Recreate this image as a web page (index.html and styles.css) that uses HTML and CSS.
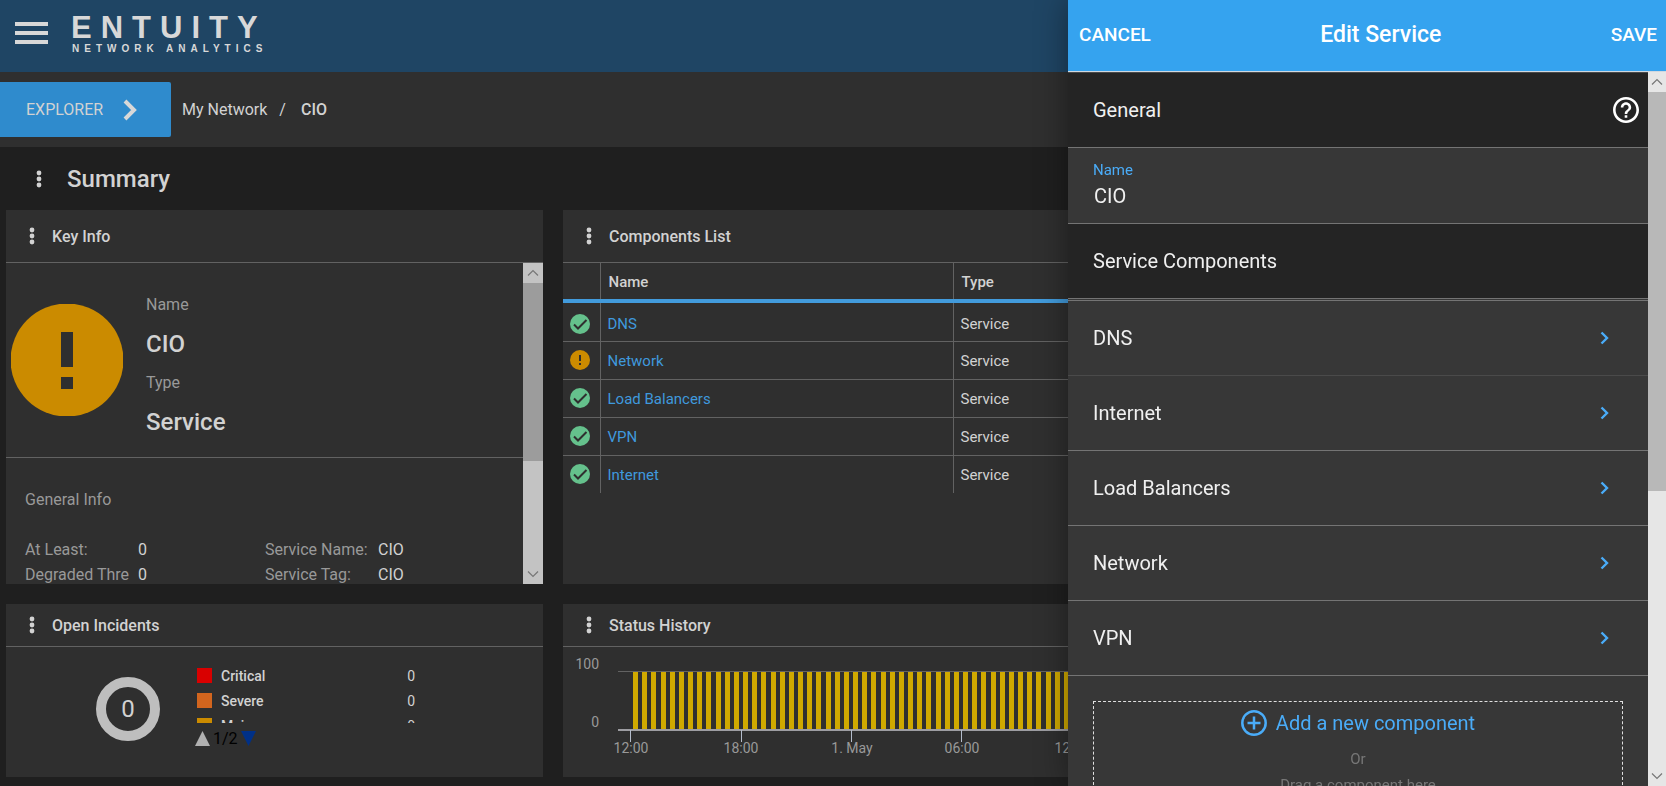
FILE: index.html
```
<!DOCTYPE html>
<html lang="en">

<head>
    <meta charset="UTF-8">
    <meta name="viewport" content="width=device-width, initial-scale=1.0">
    <title>Entuity - Edit Service</title>
    <link rel="stylesheet" href="styles.css">
</head>

<body>

    <!-- shared icons -->
    <svg class="sprite" aria-hidden="true">
        <symbol id="dots" viewBox="0 0 6 18">
            <circle cx="3" cy="3" r="2.4" />
            <circle cx="3" cy="9" r="2.4" />
            <circle cx="3" cy="15" r="2.4" />
        </symbol>
        <symbol id="ok" viewBox="0 0 20 20">
            <circle cx="10" cy="10" r="10" fill="#65c18c" />
            <path d="M4 10.5l4 4 8.5-8.5" fill="none" stroke="#2f2f2f" stroke-width="2" />
        </symbol>
        <symbol id="warn" viewBox="0 0 20 20">
            <circle cx="10" cy="10" r="10" fill="#cb8b00" />
            <path d="M9 5h2v6H9zM9 13h2v2H9z" fill="#2f2f2f" />
        </symbol>
        <symbol id="next" viewBox="0 0 9 14">
            <path d="M1.5 1.5L7 7l-5.500 5.500" fill="none" stroke="#4aacf8" stroke-width="2.400" />
        </symbol>
        <symbol id="up" viewBox="0 0 12 7">
            <path d="M1 6l5-5 5 5" fill="none" stroke="#777" stroke-width="1.200" />
        </symbol>
        <symbol id="down" viewBox="0 0 12 7">
            <path d="M1 1l5 5 5-5" fill="none" stroke="#777" stroke-width="1.200" />
        </symbol>
    </svg>

    <header class="topbar">
        <button type="button" class="menu-button" aria-label="Menu"><span></span><span></span><span></span></button>
        <div class="logo">
            <span class="logo-name">ENTUITY</span>
            <span class="logo-tag">NETWORK ANALYTICS</span>
        </div>
    </header>

    <nav class="crumbs">
        <button type="button" class="explorer">EXPLORER
            <svg width="14" height="22" viewBox="0 0 14 22"><path d="M2 2l9 9-9 9" fill="none" stroke="#d8d8d8" stroke-width="4" /></svg>
        </button>
        <a href="#">My Network</a>
        <span class="slash">/</span>
        <span class="current">CIO</span>
    </nav>

    <main>
        <div class="page-title">
            <button type="button" class="dots" aria-label="Options"><svg><use href="#dots" /></svg></button>
            <h1>Summary</h1>
        </div>

        <div class="dashboard">
            <section class="card">
                <div class="card-header">
                    <button type="button" class="dots" aria-label="Options"><svg><use href="#dots" /></svg></button>
                    <h2>Key Info</h2>
                </div>
                <div class="scroll-area">
                    <div class="scroll-content">
                        <div class="key-info">
                            <svg class="status-big" viewBox="0 0 112 112">
                                <circle cx="56" cy="56" r="56.500" fill="#cb8b00" />
                                <path d="M50 28h12v35H50zM50 73h12v12H50z" fill="#2f2f2f" />
                            </svg>
                            <dl>
                                <dt>Name</dt>
                                <dd>CIO</dd>
                                <dt>Type</dt>
                                <dd>Service</dd>
                            </dl>
                        </div>
                        <div class="general-info">
                            <h3>General Info</h3>
                            <dl>
                                <dt>At Least:</dt>
                                <dd>0</dd>
                                <dt>Service Name:</dt>
                                <dd>CIO</dd>
                                <dt>Degraded Thre</dt>
                                <dd>0</dd>
                                <dt>Service Tag:</dt>
                                <dd>CIO</dd>
                            </dl>
                        </div>
                    </div>
                    <div class="scrollbar" aria-hidden="true">
                        <svg><use href="#up" /></svg>
                        <div class="thumb"></div>
                        <svg><use href="#down" /></svg>
                    </div>
                </div>
            </section>

            <section class="card wide">
                <div class="card-header">
                    <button type="button" class="dots" aria-label="Options"><svg><use href="#dots" /></svg></button>
                    <h2>Components List</h2>
                </div>
                <table>
                    <thead>
                        <tr>
                            <th class="col-status"></th>
                            <th class="col-name">Name</th>
                            <th>Type</th>
                        </tr>
                    </thead>
                    <tbody>
                        <tr>
                            <td><svg><use href="#ok" /></svg></td>
                            <td><a href="#">DNS</a></td>
                            <td>Service</td>
                        </tr>
                        <tr>
                            <td><svg><use href="#warn" /></svg></td>
                            <td><a href="#">Network</a></td>
                            <td>Service</td>
                        </tr>
                        <tr>
                            <td><svg><use href="#ok" /></svg></td>
                            <td><a href="#">Load Balancers</a></td>
                            <td>Service</td>
                        </tr>
                        <tr>
                            <td><svg><use href="#ok" /></svg></td>
                            <td><a href="#">VPN</a></td>
                            <td>Service</td>
                        </tr>
                        <tr>
                            <td><svg><use href="#ok" /></svg></td>
                            <td><a href="#">Internet</a></td>
                            <td>Service</td>
                        </tr>
                    </tbody>
                </table>
            </section>

            <section class="card small">
                <div class="card-header">
                    <button type="button" class="dots" aria-label="Options"><svg><use href="#dots" /></svg></button>
                    <h2>Open Incidents</h2>
                </div>
                <div class="incidents">
                    <div class="donut">0</div>
                    <div class="legend">
                        <ul>
                            <li><i class="critical"></i>Critical<span>0</span></li>
                            <li><i class="severe"></i>Severe<span>0</span></li>
                            <li><i class="major"></i>Major<span>0</span></li>
                        </ul>
                        <div class="pager">
                            <button type="button" aria-label="Previous"><svg width="15" height="15"><path d="M0 15L7.500 0 15 15z" fill="#b0b0b0" /></svg></button>
                            <span>1/2</span>
                            <button type="button" aria-label="Next"><svg width="15" height="15"><path d="M0 0h15L7.500 15z" fill="#003087" /></svg></button>
                        </div>
                    </div>
                </div>
            </section>

            <section class="card wide small">
                <div class="card-header">
                    <button type="button" class="dots" aria-label="Options"><svg><use href="#dots" /></svg></button>
                    <h2>Status History</h2>
                </div>
                <svg class="chart" id="chart" height="120">
                    <path class="grid-line" d="M55 24.500H537" />
                    <text x="36" y="22" text-anchor="end">100</text>
                    <text x="36" y="80" text-anchor="end">0</text>
                    <g id="bars"></g>
                    <path class="axis" d="M55 83H537" />
                    <path class="tick" d="M67.500 83v12M178.500 83v12M288.500 83v12M398.500 83v12M508.500 83v12" />
                    <text x="68" y="106" text-anchor="middle">12:00</text>
                    <text x="178" y="106" text-anchor="middle">18:00</text>
                    <text x="289" y="106" text-anchor="middle">1. May</text>
                    <text x="399" y="106" text-anchor="middle">06:00</text>
                    <text x="509" y="106" text-anchor="middle">12:00</text>
                </svg>
            </section>
        </div>
    </main>

    <aside class="drawer">
        <div class="drawer-header">
            <button type="button">CANCEL</button>
            <h2>Edit Service</h2>
            <button type="button">SAVE</button>
        </div>
        <div class="drawer-body">
            <form class="drawer-content">
                <div class="section-title">
                    <h3>General</h3>
                    <button type="button" class="help" aria-label="Help">
                        <svg width="26" height="26" viewBox="2 2 20 20"><path fill="#fff" d="M11 18h2v-2h-2v2zm1-16C6.480 2 2 6.480 2 12s4.480 10 10 10 10-4.480 10-10S17.520 2 12 2zm0 18c-4.410 0-8-3.590-8-8s3.590-8 8-8 8 3.590 8 8-3.590 8-8 8zm0-14c-2.210 0-4 1.790-4 4h2c0-1.100.9-2 2-2s2 .9 2 2c0 2-3 1.750-3 5h2c0-2.250 3-2.500 3-5 0-2.210-1.790-4-4-4z" /></svg>
                    </button>
                </div>
                <div class="field">
                    <label for="name">Name</label>
                    <input type="text" id="name" name="name" value="CIO">
                </div>
                <div class="section-title">
                    <h3>Service Components</h3>
                </div>
                <ul class="components">
                    <li><a href="#">DNS<svg><use href="#next" /></svg></a></li>
                    <li><a href="#">Internet<svg><use href="#next" /></svg></a></li>
                    <li><a href="#">Load Balancers<svg><use href="#next" /></svg></a></li>
                    <li><a href="#">Network<svg><use href="#next" /></svg></a></li>
                    <li><a href="#">VPN<svg><use href="#next" /></svg></a></li>
                </ul>
                <div class="drop-zone">
                    <button type="button">
                        <svg width="26" height="26" viewBox="0 0 26 26" fill="none" stroke="#4aacf8" stroke-width="2.500"><circle cx="13" cy="13" r="11.700" /><path d="M13 6.500v13M6.500 13h13" /></svg>
                        Add a new component
                    </button>
                    <p>Or</p>
                    <p>Drag a component here</p>
                </div>
            </form>
            <div class="scrollbar" aria-hidden="true">
                <svg><use href="#up" /></svg>
                <div class="thumb"></div>
                <svg><use href="#down" /></svg>
            </div>
        </div>
    </aside>

    <script>
        // one bar per half hour, 110px for every six hours
        const bars = document.getElementById('bars');
        let html = '';
        for (let i = 0; i < 50; i++) {
            const x = 70 + Math.round(i * 110 / 12);
            html += `<rect x="${x}" y="25" width="5" height="57" />`;
        }
        bars.innerHTML = html;
    </script>
</body>

</html>
```
FILE: styles.css
```
* {
    box-sizing: border-box;
}

body {
    font-family: Roboto, sans-serif;
    font-size: 16px;
    margin: 0;
    height: 100vh;
    overflow: hidden;
    display: flex;
    flex-direction: column;
    background-color: #1f1f1f;
    color: #d2d2d2;
}

h1,
h2,
h3,
p,
ul,
dl,
dd {
    margin: 0;
    padding: 0;
    list-style: none;
}

button {
    font-family: inherit;
    color: inherit;
    background: none;
    border: none;
    padding: 0;
    cursor: pointer;
}

a {
    color: inherit;
    text-decoration: none;
}

svg {
    display: block;
}

.sprite {
    position: absolute;
    width: 0;
    height: 0;
}

/* Top bar */
.topbar {
    height: 72px;
    flex: none;
    display: flex;
    align-items: flex-start;
    gap: 23px;
    padding: 14px 15px;
    background-color: #1f4564;
}

.menu-button {
    display: flex;
    flex-direction: column;
    gap: 5px;
    width: 33px;
    padding-top: 8px;
}

.menu-button span {
    height: 4px;
    background-color: #d8d8d8;
}

.logo {
    font-family: "Liberation Sans", sans-serif;
    color: #d8d8d8;
}

.logo span {
    display: block;
    white-space: nowrap;
}

.logo-name {
    font-size: 31px;
    font-weight: bold;
    line-height: 28px;
    letter-spacing: 9px;
}

.logo-tag {
    padding-left: 1px;
    font-size: 10px;
    font-weight: bold;
    line-height: 14px;
    letter-spacing: 5px;
}

/* Breadcrumbs */
.crumbs {
    height: 75px;
    flex: none;
    display: flex;
    align-items: center;
    background-color: #2f2f2f;
}

.explorer {
    display: flex;
    align-items: center;
    gap: 20px;
    width: 171px;
    height: 55px;
    margin-right: 11px;
    padding-left: 26px;
    font-size: 16px;
    background-color: #2f8bcd;
    border-radius: 0 2px 2px 0;
}

.slash {
    margin: 0 15px 0 12px;
}

.current {
    font-weight: 500;
}

/* Summary */
main {
    flex: 1;
    display: flex;
    flex-direction: column;
}

.page-title {
    height: 63px;
    display: flex;
    align-items: center;
    gap: 25px;
    padding-left: 36px;
}

.page-title h1 {
    font-size: 24px;
    font-weight: 500;
}

.dots svg {
    width: 6px;
    height: 18px;
    fill: #d2d2d2;
}

.dashboard {
    flex: 1;
    display: grid;
    grid-template-columns: repeat(3, 1fr);
    grid-template-rows: 374px 1fr;
    gap: 20px;
    padding: 0 9px 9px 6px;
}

.card {
    display: flex;
    flex-direction: column;
    min-width: 0;
    background-color: #2f2f2f;
}

.wide {
    grid-column: span 2;
}

.card-header {
    height: 53px;
    flex: none;
    display: flex;
    align-items: center;
    gap: 17px;
    padding-left: 23px;
    border-bottom: 1px solid #626262;
}

.small .card-header {
    height: 43px;
}

.card-header h2 {
    font-size: 16px;
    font-weight: 500;
}

/* Key info */
.scroll-area {
    display: flex;
    flex: 1;
    min-height: 0;
}

.scroll-content {
    flex: 1;
    overflow: hidden;
}

.key-info {
    display: flex;
    gap: 23px;
    height: 195px;
    padding: 28px 0 0 5px;
    border-bottom: 1px solid #626262;
}

.status-big {
    width: 112px;
    height: 112px;
    margin-top: 13px;
}

dt {
    color: #999;
}

.key-info dt {
    line-height: 28px;
}

.key-info dd {
    font-size: 24px;
    font-weight: 500;
    line-height: 50px;
}

.general-info {
    padding: 32px 19px 0;
}

.general-info h3 {
    font-size: 16px;
    font-weight: 400;
    line-height: 20px;
    color: #999;
}

.general-info dl {
    display: grid;
    grid-template-columns: 113px 127px 113px 1fr;
    margin-top: 27px;
    line-height: 25px;
    white-space: nowrap;
}

/* Scrollbars */
.scrollbar {
    width: 20px;
    display: flex;
    flex-direction: column;
    background-color: #c3c3c3;
}

.scrollbar svg {
    width: 100%;
    height: 20px;
    padding: 6px 4px;
}

.thumb {
    height: 178px;
    margin-bottom: auto;
    background-color: #9c9c9c;
}

/* Components table */
table {
    width: 100%;
    border-collapse: collapse;
    table-layout: fixed;
    font-size: 15px;
}

th,
td {
    height: 38px;
    padding: 2px 0 0 7px;
    text-align: left;
    border-left: 1px solid #626262;
    border-bottom: 1px solid #626262;
}

th {
    font-weight: 500;
    padding-left: 8px;
    border-bottom: 4px solid #429bdc;
}

th:first-child,
td:first-child {
    border-left: none;
    padding: 0 0 0 7px;
}

tbody tr:first-child td {
    height: 40px;
    padding-top: 4px;
}

tr:last-child td {
    border-bottom: none;
}

.col-status {
    width: 37px;
}

.col-name {
    width: 353px;
}

td svg {
    width: 20px;
    height: 20px;
}

td a {
    color: #3f99dd;
}

/* Open incidents */
.incidents {
    display: flex;
    padding: 18px 0 0 90px;
}

.donut {
    display: flex;
    align-items: center;
    justify-content: center;
    width: 64px;
    height: 64px;
    margin-top: 12px;
    font-size: 24px;
    border: 10px solid #bebebe;
    border-radius: 50%;
}

.legend {
    width: 220px;
    margin-left: 35px;
}

.legend ul {
    height: 58px;
    overflow: hidden;
    margin-left: 2px;
}

.legend li {
    display: flex;
    align-items: center;
    height: 25px;
    padding-bottom: 4px;
    font-size: 14px;
    font-weight: 500;
    line-height: 16px;
}

.legend li span {
    margin-left: auto;
    font-weight: 400;
}

.legend i {
    width: 15px;
    height: 15px;
    margin-right: 9px;
}

.critical {
    background-color: #d90000;
}

.severe {
    background-color: #d2651e;
}

.major {
    background-color: #cb8b00;
}

.pager {
    display: flex;
    align-items: center;
    gap: 3px;
    margin-top: 6px;
    color: #000;
}

/* Status history */
.chart {
    width: 100%;
    font-size: 14px;
    shape-rendering: crispEdges;
}

.chart text {
    fill: #999;
}

.grid-line {
    stroke: #626262;
}

.axis {
    stroke: #9d9da2;
    stroke-width: 2;
}

.tick {
    stroke: #b4bccb;
}

#bars {
    fill: #cfa900;
}

/* Edit drawer */
.drawer {
    position: fixed;
    top: 0;
    right: 0;
    bottom: 0;
    width: 598px;
    display: flex;
    flex-direction: column;
    color: #f0f0f0;
    background-color: #373737;
    box-shadow: 0 0 30px rgba(0, 0, 0, 0.4);
}

.drawer-header {
    height: 72px;
    flex: none;
    display: flex;
    align-items: center;
    justify-content: space-between;
    padding: 0 9px 2px 11px;
    color: #fff;
    background-color: #35a3ef;
    border-bottom: 1px solid #d0d8e0;
}

.drawer-header h2 {
    font-size: 23px;
    font-weight: 500;
}

.drawer-header button {
    font-size: 19px;
    font-weight: 500;
}

.drawer-body {
    flex: 1;
    min-height: 0;
    display: flex;
}

.drawer-content {
    flex: 1;
    overflow: hidden;
    font-size: 20px;
    border-top: 1px solid #4a4a4a;
}

.section-title {
    height: 75px;
    display: flex;
    align-items: center;
    justify-content: space-between;
    padding: 0 9px 0 25px;
    background-color: #242424;
    border-bottom: 1px solid #747474;
}

.section-title h3 {
    font-size: 20px;
    font-weight: 400;
}

.field {
    height: 76px;
    padding: 12px 25px;
    border-bottom: 1px solid #747474;
}

.field label {
    display: block;
    font-size: 15px;
    line-height: 20px;
    color: #4aacf8;
}

.field input {
    width: 100%;
    height: 32px;
    padding: 0 1px;
    font-family: inherit;
    font-size: 20px;
    color: #f0f0f0;
    background: none;
    border: none;
    outline: none;
}

.components {
    margin-top: 1px;
    border-top: 1px solid #747474;
}

.components a {
    height: 75px;
    display: flex;
    align-items: center;
    justify-content: space-between;
    padding: 0 39px 0 25px;
    border-bottom: 1px solid #747474;
}

.components li:first-child a {
    border-color: #4a4a4a;
}

.components svg {
    width: 9px;
    height: 14px;
}

.drop-zone {
    height: 160px;
    margin: 25px;
    padding-top: 8px;
    text-align: center;
    border: 1px dashed #e0e0e0;
}

.drop-zone button {
    display: flex;
    align-items: center;
    gap: 9px;
    margin: 0 auto 10px;
    font-size: 20px;
    color: #4aacf8;
}

.drop-zone p {
    font-size: 15px;
    line-height: 26px;
    color: #777;
}

.drawer .scrollbar {
    width: 18px;
    background-color: #e6e6e6;
}

.drawer .scrollbar svg {
    padding: 6px 3px;
}

.drawer .thumb {
    height: 399px;
    background-color: #b8b8b8;
}
```
